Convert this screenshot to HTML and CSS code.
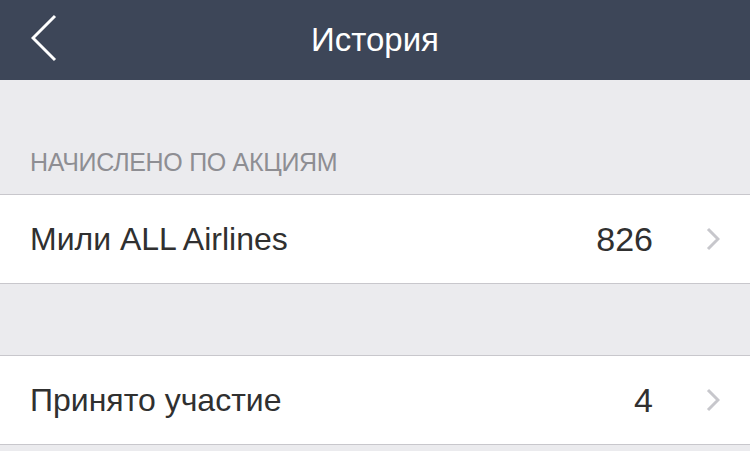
FILE: index.html
```html
<!DOCTYPE html>
<html lang="ru">
<head>
    <meta charset="UTF-8">
    <meta name="viewport" content="width=device-width, initial-scale=1.0">
    <title>История</title>
    <link rel="stylesheet" href="styles.css">
</head>
<body>
    <div class="navbar">
        <a class="back" href="#">
            <svg width="26" height="48" viewBox="0 0 26 48">
                <polyline points="24,2 2,24 24,46" fill="none" stroke="#ffffff" stroke-width="3"/>
            </svg>
        </a>
        <h1 class="title">История</h1>
    </div>

    <div class="content">
        <div class="section-title">НАЧИСЛЕНО ПО АКЦИЯМ</div>
        <div class="group">
            <a class="row" href="#">
                <span class="row-label">Мили ALL Airlines</span>
                <span class="row-value">826</span>
                <svg class="chevron" width="14" height="24" viewBox="0 0 14 24">
                    <polyline points="2,2 12,12 2,22" fill="none" stroke="#c7c7cc" stroke-width="3"/>
                </svg>
            </a>
        </div>

        <div class="spacer"></div>

        <div class="group">
            <a class="row" href="#">
                <span class="row-label">Принято участие</span>
                <span class="row-value">4</span>
                <svg class="chevron" width="14" height="24" viewBox="0 0 14 24">
                    <polyline points="2,2 12,12 2,22" fill="none" stroke="#c7c7cc" stroke-width="3"/>
                </svg>
            </a>
        </div>
    </div>
</body>
</html>
```

FILE: styles.css
```css
body, html {
    margin: 0;
    padding: 0;
    width: 100%;
    height: 100%;
    font-family: "Liberation Sans", Arial, sans-serif;
    background-color: #ebebee;
}

.navbar {
    height: 80px;
    background-color: #3d4658;
    display: flex;
    align-items: center;
    justify-content: center;
    position: relative;
}

.back {
    position: absolute;
    left: 31px;
    top: 14px;
    display: block;
    line-height: 0;
}

.title {
    margin: 0;
    color: white;
    font-size: 33px;
    font-weight: normal;
}

.content {
    padding-top: 64px;
}

.section-title {
    padding: 0 30px;
    font-size: 25px;
    letter-spacing: -0.3px;
    color: #8e8e93;
    height: 50px;
    line-height: 36px;
}

.group {
    background-color: white;
    border-top: 1px solid #c8c7cc;
    border-bottom: 1px solid #c8c7cc;
}

.row {
    display: flex;
    align-items: center;
    height: 88px;
    padding: 0 30px;
    color: #303030;
    text-decoration: none;
}

.row-label {
    flex: 1;
    font-size: 32px;
}

.row-value {
    font-size: 34px;
    margin-right: 53px;
}

.spacer {
    height: 71px;
}
```
